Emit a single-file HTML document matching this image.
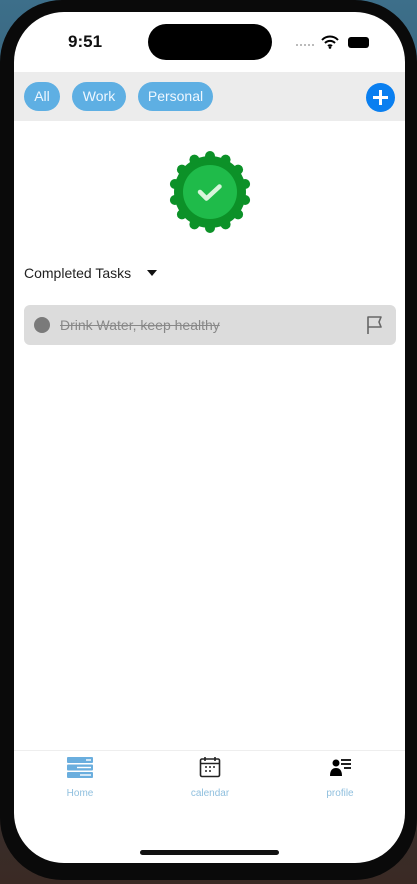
<!DOCTYPE html>
<html><head><style>
*{margin:0;padding:0;box-sizing:border-box}
body{width:417px;height:884px;overflow:hidden;background:linear-gradient(#3d6f8a 0,#2b4a5c 40%,#3a2a24 100%);font-family:"Liberation Sans",sans-serif;position:relative}
.phone{position:absolute;left:0;top:0;width:417px;height:880px;background:#0a0a0a;border-radius:62px}
.screen{position:absolute;left:14px;top:12px;width:391px;height:851px;background:#fff;border-radius:50px;overflow:hidden}
.abs{position:absolute}
.chip{position:absolute;top:70px;height:29px;border-radius:15px;background:#5eafe3;color:#eef7ff;font-size:14px;line-height:29px;text-align:center}
</style></head><body>
<div class="phone"></div>
<div class="screen">
  <div class="abs" style="left:54px;top:20px;font-size:17px;font-weight:bold;color:#111">9:51</div>
  <div class="abs" style="left:134px;top:12px;width:124px;height:36px;background:#000;border-radius:18px"></div>
  <div class="abs" style="left:282px;top:32px;width:18px;border-top:2px dotted #bbb"></div>
  <svg class="abs" style="left:307px;top:23px" width="18" height="14" viewBox="0 0 18 14"><path d="M1 5a11 11 0 0 1 16 0M4 8a7 7 0 0 1 10 0M7 11a3 3 0 0 1 4 0" stroke="#000" stroke-width="2" fill="none"/><circle cx="9" cy="12.5" r="1.3"/></svg>
  <div class="abs" style="left:334px;top:25px;width:21px;height:11px;background:#000;border-radius:3px"></div>
  <div class="abs" style="left:0;top:60px;width:391px;height:49px;background:#ececec"></div>
  <div class="chip" style="left:10px;width:36px">All</div>
  <div class="chip" style="left:58px;width:54px">Work</div>
  <div class="chip" style="left:124px;width:75px">Personal</div>
  <div class="abs" style="left:352px;top:71px;width:29px;height:29px;border-radius:50%;background:#0a7ff0"></div>
  <div class="abs" style="left:359px;top:84px;width:15px;height:2.5px;background:#fff"></div>
  <div class="abs" style="left:365.3px;top:78px;width:2.5px;height:15px;background:#fff"></div>
  <svg class="abs" style="left:152px;top:136px" width="88" height="88" viewBox="-44 -44 88 88">
    <g fill="#0c9128">
      <circle r="36"/>
      <circle cx="0" cy="-36" r="5"/><circle cx="15.6" cy="-32.4" r="5"/><circle cx="28.1" cy="-22.4" r="5"/><circle cx="35.1" cy="-8" r="5"/><circle cx="35.1" cy="8" r="5"/><circle cx="28.1" cy="22.4" r="5"/><circle cx="15.6" cy="32.4" r="5"/><circle cx="0" cy="36" r="5"/><circle cx="-15.6" cy="32.4" r="5"/><circle cx="-28.1" cy="22.4" r="5"/><circle cx="-35.1" cy="8" r="5"/><circle cx="-35.1" cy="-8" r="5"/><circle cx="-28.1" cy="-22.4" r="5"/><circle cx="-15.6" cy="-32.4" r="5"/>
    </g>
    <circle r="27" fill="#1fbb4a"/>
    <path d="M-10 0l6.5 6.5 13-12" stroke="#d8f5dc" stroke-width="4.5" fill="none" stroke-linecap="round" stroke-linejoin="round"/>
  </svg>
  <div class="abs" style="left:10px;top:253px;font-size:14px;color:#222">Completed Tasks</div>
  <div class="abs" style="left:133px;top:258px;width:0;height:0;border-left:5px solid transparent;border-right:5px solid transparent;border-top:6px solid #111"></div>
  <div class="abs" style="left:10px;top:293px;width:372px;height:40px;background:#dcdcdc;border-radius:6px"></div>
  <div class="abs" style="left:20px;top:305px;width:16px;height:16px;border-radius:50%;background:#7a7a7a"></div>
  <div class="abs" style="left:46px;top:305px;font-size:14px;color:#888;text-decoration:line-through">Drink Water, keep healthy</div>
  <svg class="abs" style="left:352px;top:303px" width="18" height="20" viewBox="0 0 18 20"><path d="M2 19V2h13l-2 5 2 5H2" stroke="#666" stroke-width="1.6" fill="none" stroke-linejoin="round"/></svg>
  <div class="abs" style="left:0;top:738px;width:391px;height:1px;background:#eee"></div>
  <svg class="abs" style="left:53px;top:745px" width="26" height="21" viewBox="0 0 26 21"><g fill="#6aaede"><rect y="0" width="26" height="6" rx="1"/><rect y="7.5" width="26" height="6" rx="1"/><rect y="15" width="26" height="6" rx="1"/></g><g fill="#fff"><rect x="19" y="2.3" width="5" height="1.4"/><rect x="10" y="9.8" width="14" height="1.4"/><rect x="13" y="17.3" width="11" height="1.4"/></g></svg>
  <div class="abs" style="left:40px;top:776px;width:52px;text-align:center;font-size:10px;color:#8fbfde">Home</div>
  <svg class="abs" style="left:185px;top:744px" width="22" height="22" viewBox="0 0 22 22"><rect x="1.5" y="3" width="19" height="17.5" rx="1.5" stroke="#222" stroke-width="1.6" fill="none"/><path d="M1.5 7.5h19M6 1v4M16 1v4" stroke="#222" stroke-width="1.6"/><path d="M6 11h2M10 11h2M14 11h2M6 15h2M10 15h2" stroke="#222" stroke-width="1.4"/></svg>
  <div class="abs" style="left:166px;top:776px;width:60px;text-align:center;font-size:10px;color:#8fbfde">calendar</div>
  <svg class="abs" style="left:316px;top:746px" width="22" height="18" viewBox="0 0 22 18"><circle cx="6" cy="5" r="3.5"/><path d="M0 18c0-6 2.5-8 6-8s6 2 6 8z"/><path d="M11 2h10M11 6h10M14 10h7" stroke="#000" stroke-width="1.8"/></svg>
  <div class="abs" style="left:301px;top:776px;width:50px;text-align:center;font-size:10px;color:#8fbfde">profile</div>
  <div class="abs" style="left:126px;top:838px;width:139px;height:5px;border-radius:3px;background:#111"></div>
</div>
</body></html>
